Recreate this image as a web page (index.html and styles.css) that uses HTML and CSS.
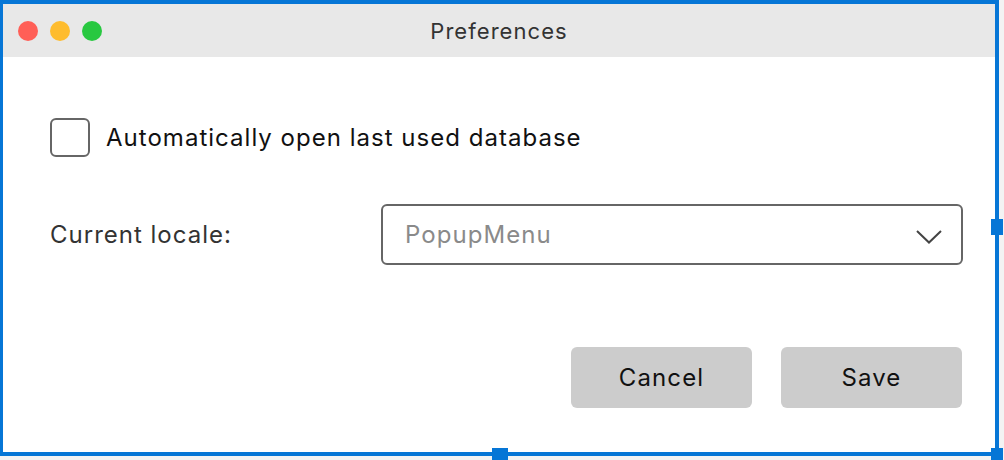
FILE: index.html
```html
<!DOCTYPE html>
<html>
<head>
<meta charset="utf-8">
<link rel="stylesheet" href="styles.css">
</head>
<body>
<div class="canvas">
  <div class="window">
    <div class="titlebar">
      <div class="lights">
        <span class="light red"></span>
        <span class="light yellow"></span>
        <span class="light green"></span>
      </div>
      <div class="title">Preferences</div>
    </div>
    <div class="content">
      <label class="check-row">
        <span class="checkbox"></span>
        <span class="check-label">Automatically open last used database</span>
      </label>
      <div class="locale-row">
        <span class="locale-label">Current locale:</span>
        <div class="popup">
          <span class="popup-text">PopupMenu</span>
          <svg class="chevron" width="28" height="16" viewBox="0 0 28 16"><path d="M2 2 L14 13.5 L26 2" fill="none" stroke="#444" stroke-width="2"/></svg>
        </div>
      </div>
      <div class="buttons">
        <div class="btn">Cancel</div>
        <div class="btn">Save</div>
      </div>
    </div>
    <span class="handle h-right"></span>
    <span class="handle h-bottom"></span>
    <span class="handle h-corner"></span>
  </div>
</div>
</body>
</html>
```
FILE: styles.css
```css
html, body {
  margin: 0;
  padding: 0;
  background: #f3f3f3;
  font-family: Inter, "Noto Sans", "Liberation Sans", sans-serif;
}
.canvas {
  width: 1004px;
  height: 460px;
  overflow: hidden;
}
.window {
  position: relative;
  width: 992px;
  height: 448px;
  border: 4px solid #0676d6;
  border-left-width: 3px;
  background: #fff;
}
.titlebar {
  height: 53px;
  background: #e8e8e8;
  display: flex;
  align-items: center;
  position: relative;
}
.lights {
  display: flex;
  gap: 12px;
  padding-left: 15px;
}
.light {
  width: 20px;
  height: 20px;
  border-radius: 50%;
  display: block;
}
.red { background: #ff5f57; }
.yellow { background: #febc2e; }
.green { background: #28c840; }
.title {
  position: absolute;
  left: 0;
  right: 0;
  text-align: center;
  font-size: 22px;
  letter-spacing: 1.05px;
  color: #333;
  top: 14px;
}
.content {
  padding: 61px 33px 0 47px;
}
.check-row {
  display: flex;
  align-items: center;
  gap: 16px;
  height: 39px;
}
.checkbox {
  width: 36px;
  height: 35px;
  border: 2px solid #666;
  border-radius: 6px;
  display: block;
}
.check-label {
  font-size: 24px;
  letter-spacing: 1.02px;
  color: #111;
}
.locale-row {
  display: flex;
  align-items: center;
  margin-top: 47px;
}
.locale-label {
  width: 331px;
  font-size: 24px;
  letter-spacing: 1px;
  color: #333;
}
.popup {
  flex: 1;
  height: 57px;
  border: 2px solid #666;
  border-radius: 6px;
  display: flex;
  align-items: center;
  justify-content: space-between;
  padding: 0 18px 0 22px;
  margin-right: -1px;
}
.popup-text {
  font-size: 24px;
  letter-spacing: 1.05px;
  color: #8a8a8a;
}
.chevron {
  display: block;
  margin-top: 4px;
}
.buttons {
  display: flex;
  justify-content: flex-end;
  gap: 29px;
  margin-top: 82px;
}
.btn {
  width: 181px;
  height: 61px;
  background: #cccccc;
  border-radius: 6px;
  display: flex;
  align-items: center;
  justify-content: center;
  font-size: 24px;
  letter-spacing: 1.1px;
  color: #111;
}
.handle {
  position: absolute;
  background: #0676d6;
  display: block;
}
.h-right {
  right: -8px;
  top: 215px;
  width: 12px;
  height: 16px;
}
.h-bottom {
  bottom: -8px;
  left: 489px;
  width: 16px;
  height: 12px;
}
.h-corner {
  right: -8px;
  bottom: -8px;
  width: 12px;
  height: 12px;
}
```
